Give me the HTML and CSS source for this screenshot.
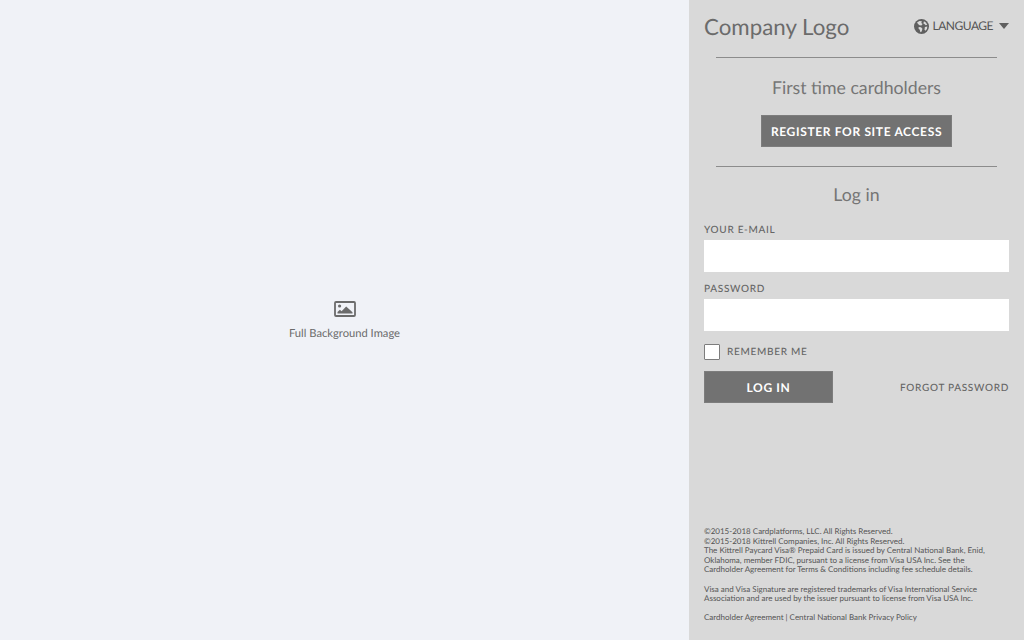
FILE: index.html
```html
<!DOCTYPE html>
<html lang="en">
<head>
<meta charset="utf-8">
<title>Log in</title>
<link rel="stylesheet" href="styles.css">
</head>
<body>
<div class="page">
  <main class="hero">
    <svg class="hero-icon" width="22" height="16" viewBox="0 0 22 16" aria-hidden="true">
      <rect x="1" y="1" width="20" height="14" rx="1" fill="none" stroke="#6b6b6b" stroke-width="1.8"/>
      <circle cx="5.6" cy="5" r="1.6" fill="#6b6b6b"/>
      <path d="M3.5 12.5v-1.6l2.4-2.2 1.7 1.5 4.6-4.6 6.3 5.6v1.3z" fill="#6b6b6b"/>
    </svg>
    <p class="hero-text">Full Background Image</p>
  </main>
  <aside class="side">
    <header class="top">
      <div class="logo">Company Logo</div>
      <div class="lang">
        <svg class="globe" width="15" height="15" viewBox="0 0 16 16" aria-hidden="true">
          <circle cx="8" cy="8" r="8" fill="#5f5f5f"/>
          <path d="M3.2 3.6l2.6-1.5 2.6.4-.6 1.7 1.4 1.2-1.3 1.6-2.1-.3-1.5-1.3zM5 8.4l2.5.5 1.5 1.5-.8 3-1.4.6-.7-2.6-1.3-1.3zM10.6 2.3l2 1.3 1.5 2.4-1.6.6-1.4-1.4-1.1-.5zM11.6 8.4l2.6-.4-.4 2.6-1.6 2-1-1.2z" fill="#d9d9d9"/>
        </svg>
        <span>LANGUAGE</span>
        <span class="caret"></span>
      </div>
    </header>
    <section class="block first">
      <h2 class="title">First time cardholders</h2>
      <a class="btn btn-register" href="#">REGISTER FOR SITE ACCESS</a>
    </section>
    <section class="block login">
      <h2 class="title">Log in</h2>
    </section>
    <form class="form">
      <label class="label" for="em">YOUR E-MAIL</label>
      <input class="input" id="em" type="text">
      <label class="label" for="pw">PASSWORD</label>
      <input class="input" id="pw" type="password">
      <div class="remember">
        <span class="check"></span>
        <span class="label-inline">REMEMBER ME</span>
      </div>
      <div class="actions">
        <a class="btn btn-login" href="#">LOG IN</a>
        <a class="forgot" href="#">FORGOT PASSWORD</a>
      </div>
    </form>
    <footer class="legal">
      <p>©2015-2018 Cardplatforms, LLC. All Rights Reserved.<br>©2015-2018 Kittrell Companies, Inc. All Rights Reserved.<br>The Kittrell Paycard Visa® Prepaid Card is issued by Central National Bank, Enid, Oklahoma, member FDIC, pursuant to a license from Visa USA Inc. See the Cardholder Agreement for Terms &amp; Conditions including fee schedule details.</p>
      <p>Visa and Visa Signature are registered trademarks of Visa International Service Association and are used by the issuer pursuant to license from Visa USA Inc.</p>
      <p>Cardholder Agreement | Central National Bank Privacy Policy</p>
    </footer>
  </aside>
</div>
</body>
</html>
```
FILE: styles.css
```css
* { box-sizing: border-box; }
html, body { margin: 0; height: 100%; }
body { font-family: Lato, "Liberation Sans", sans-serif; color: #666; text-rendering: geometricPrecision; }
.page { display: flex; height: 640px; overflow: hidden; }
.hero { flex: 1; background: #f0f2f7; display: flex; flex-direction: column; align-items: center; justify-content: center; padding-top: 3px; }
.hero-icon { display: block; margin-bottom: 7px; }
.hero-text { margin: 2px 0 0; font-size: 11.2px; line-height: 16px; color: #6b6b6b; }
.side { width: 335px; background: #d9d9d9; padding: 0 15px; display: flex; flex-direction: column; }
.top { display: flex; justify-content: space-between; align-items: flex-start; height: 57px; }
.logo { font-size: 22.3px; line-height: 30px; margin-top: 12px; color: #6b6b6b; }
.lang { display: flex; align-items: center; margin-top: 18px; font-size: 12px; line-height: 16px; letter-spacing: -.5px; color: #555; }
.globe { margin-right: 4px; }
.caret { width: 0; height: 0; margin-left: 6px; border-left: 5.5px solid transparent; border-right: 5.5px solid transparent; border-top: 6px solid #5f5f5f; }
.block { margin: 0 12px; border-top: 1px solid #8c8c8c; text-align: center; }
.first { height: 109px; padding-top: 18px; }
.login { height: 57px; padding-top: 16px; }
.title { margin: 0; font-size: 17.7px; line-height: 23px; font-weight: 400; color: #757575; }
.btn { display: flex; align-items: center; justify-content: center; background: #727272; color: #fff; font-weight: 700; text-decoration: none; border: 1px solid #7d7d7d; }
.btn-register { width: 191px; height: 32px; margin: 16px auto 0; font-size: 12px; letter-spacing: .65px; }
.form { display: flex; flex-direction: column; }
.label { font-size: 10px; line-height: 14px; font-weight: 500; letter-spacing: .7px; color: #666; height: 14px; }
.input { display: block; width: 100%; height: 32px; margin: 3px 0 10px; border: 0; background: #fff; padding: 0; }
.remember { display: flex; align-items: center; margin-top: 3px; height: 16px; }
.check { width: 16px; height: 16px; background: #fff; border: 1px solid #7d7d7d; border-radius: 1px; margin-right: 7px; }
.label-inline { font-size: 10px; font-weight: 500; letter-spacing: .7px; color: #666; }
.actions { display: flex; justify-content: space-between; align-items: center; margin-top: 11px; }
.btn-login { width: 129px; height: 32px; font-size: 12px; letter-spacing: .65px; }
.forgot { margin-top: 2px; font-size: 10px; font-weight: 500; letter-spacing: .7px; color: #666; text-decoration: none; }
.legal { margin-top: auto; padding: 0 20px 17px 0; font-size: 8px; line-height: 9.6px; color: #555; }
.legal p { margin: 0 0 9.6px; }
.legal p:last-child { margin-bottom: 0; }
```
